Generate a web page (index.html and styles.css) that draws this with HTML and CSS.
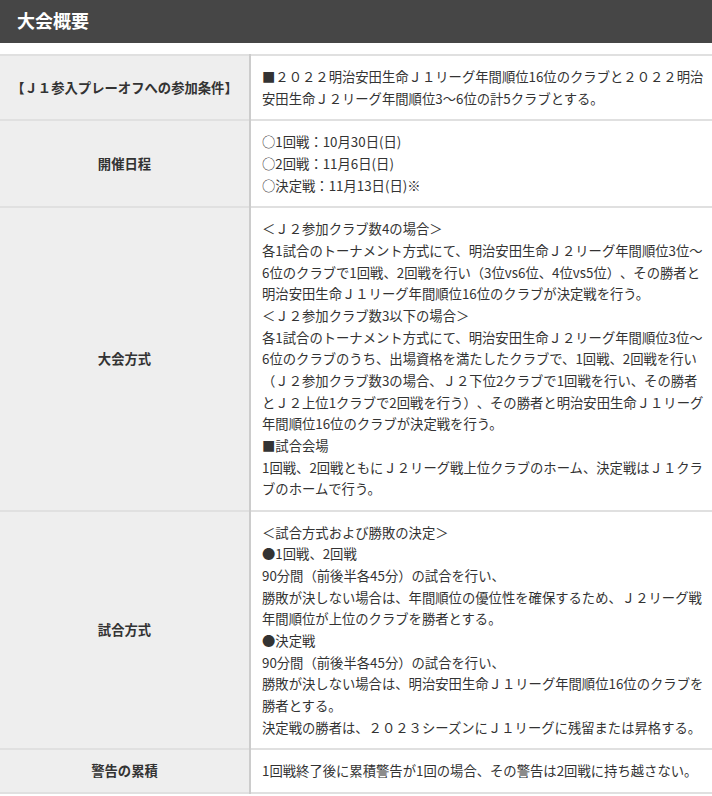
FILE: index.html
```html
<!DOCTYPE html>
<html lang="ja">
<head>
  <meta charset="UTF-8">
  <meta name="viewport" content="width=device-width, initial-scale=1.0">
  <title>大会概要</title>
  <link rel="stylesheet" href="styles.css">
</head>
<body>
  <h2 class="section-title">大会概要</h2>

  <table class="outline">
    <tr>
      <th>【Ｊ１参入プレーオフへの参加条件】</th>
      <td>■２０２２明治安田生命Ｊ１リーグ年間順位16位のクラブと２０２２明治安田生命Ｊ２リーグ年間順位3～6位の計5クラブとする。</td>
    </tr>
    <tr>
      <th>開催日程</th>
      <td>○1回戦：10月30日(日)<br>○2回戦：11月6日(日)<br>○決定戦：11月13日(日)※</td>
    </tr>
    <tr>
      <th>大会方式</th>
      <td>＜Ｊ２参加クラブ数4の場合＞<br>各1試合のトーナメント方式にて、明治安田生命Ｊ２リーグ年間順位3位～6位のクラブで1回戦、2回戦を行い（3位vs6位、4位vs5位）、その勝者と明治安田生命Ｊ１リーグ年間順位16位のクラブが決定戦を行う。<br>＜Ｊ２参加クラブ数3以下の場合＞<br>各1試合のトーナメント方式にて、明治安田生命Ｊ２リーグ年間順位3位～6位のクラブのうち、出場資格を満たしたクラブで、1回戦、2回戦を行い（Ｊ２参加クラブ数3の場合、Ｊ２下位2クラブで1回戦を行い、その勝者とＪ２上位1クラブで2回戦を行う）、その勝者と明治安田生命Ｊ１リーグ年間順位16位のクラブが決定戦を行う。<br>■試合会場<br>1回戦、2回戦ともにＪ２リーグ戦上位クラブのホーム、決定戦はＪ１クラブのホームで行う。</td>
    </tr>
    <tr>
      <th>試合方式</th>
      <td>＜試合方式および勝敗の決定＞<br>●1回戦、2回戦<br>90分間（前後半各45分）の試合を行い、<br>勝敗が決しない場合は、年間順位の優位性を確保するため、Ｊ２リーグ戦年間順位が上位のクラブを勝者とする。<br>●決定戦<br>90分間（前後半各45分）の試合を行い、<br>勝敗が決しない場合は、明治安田生命Ｊ１リーグ年間順位16位のクラブを勝者とする。<br>決定戦の勝者は、２０２３シーズンにＪ１リーグに残留または昇格する。</td>
    </tr>
    <tr>
      <th>警告の累積</th>
      <td>1回戦終了後に累積警告が1回の場合、その警告は2回戦に持ち越さない。</td>
    </tr>
  </table>
</body>
</html>
```

FILE: styles.css
```css
body { margin: 0; background: #fff; color: #333; font-family: "Noto Sans CJK JP", "Noto Sans", sans-serif; text-spacing-trim: space-all; }
.section-title { margin: 0 0 11px; height: 43px; padding: 0 17px; background-color: #464646; color: #fff; font-size: 18px; font-weight: bold; line-height: 41px; }
.outline { width: 100%; border-collapse: collapse; border-top: 2px solid #e0e0e0; font-size: 13.333px; line-height: 1.625; }
.outline tr { border-bottom: 2px solid #e0e0e0; }
.outline th { width: 249px; padding: 10px 0; background-color: #eeeeee; border-right: 2px solid #cccccc; font-weight: bold; text-align: center; vertical-align: middle; }
.outline td { padding: 10px 5px 10px 11px; background-color: #fff; text-align: left; vertical-align: top; }
```
